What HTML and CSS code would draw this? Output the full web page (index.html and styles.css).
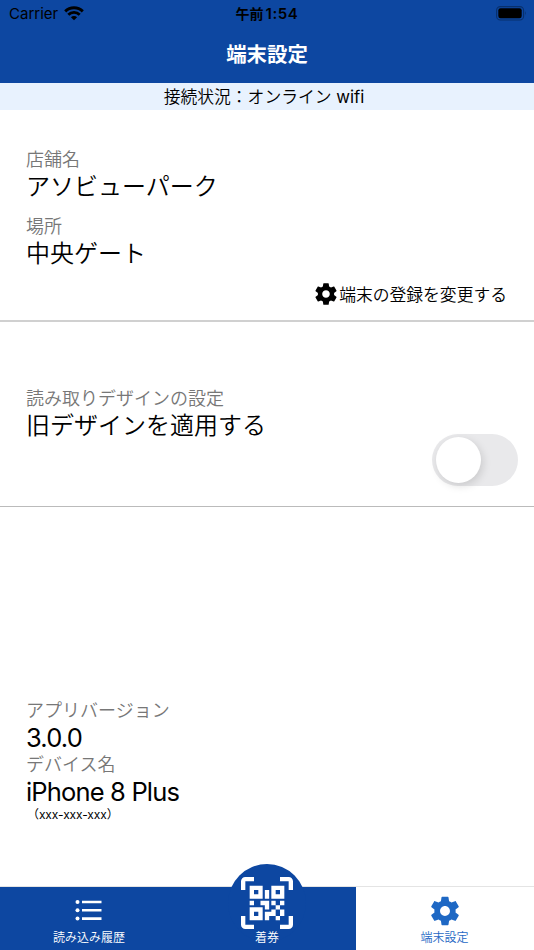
FILE: index.html
```html
<!DOCTYPE html>
<html lang="ja">
<head>
  <meta charset="utf-8">
  <title>端末設定</title>
  <link rel="stylesheet" href="styles.css">
</head>
<body>
  <header class="header">
    <div class="statusbar">
      <div class="carrier">
        <span>Carrier</span>
        <svg class="wifi" viewBox="0 0 20 15">
          <path d="M1.2 5.4 A12.5 12.5 0 0 1 18.8 5.4" />
          <path d="M4.3 8.7 A8.1 8.1 0 0 1 15.7 8.7" />
          <path class="wifi-dot" d="M10 14.3 L6.9 11.2 A4.4 4.4 0 0 1 13.1 11.2 Z" />
        </svg>
      </div>
      <div class="clock">午前<span class="clock-num">1:54</span></div>
      <svg class="battery" viewBox="0 0 31 15">
        <rect x="0.6" y="0.6" width="27" height="13.4" rx="3.8" />
        <rect class="battery-level" x="2.3" y="2.3" width="23.4" height="10" rx="2.2" />
        <path class="battery-cap" d="M29 5 Q30.8 7.3 29 9.6 Z" />
      </svg>
    </div>
    <h1 class="title">端末設定</h1>
  </header>
  <div class="connection">接続状況：オンライン <span class="network">wifi</span></div>

  <main class="content">
    <section class="shop">
      <div class="label">店舗名</div>
      <div class="value">アソビューパーク</div>
      <div class="label place">場所</div>
      <div class="value">中央ゲート</div>
      <button class="btn-change">
        <svg class="gear" viewBox="0 0 24 24"><use href="#gear" /></svg>
        <span>端末の登録を変更する</span>
      </button>
    </section>

    <section class="design">
      <div class="label">読み取りデザインの設定</div>
      <div class="value">旧デザインを適用する</div>
      <button class="toggle" role="switch" aria-checked="false"><span class="knob"></span></button>
    </section>

    <section class="device">
      <div class="label">アプリバージョン</div>
      <div class="value latin">3.0.0</div>
      <div class="label">デバイス名</div>
      <div class="value latin">iPhone 8 Plus</div>
      <div class="device-id">（xxx-xxx-xxx）</div>
    </section>
  </main>

  <nav class="tabs">
    <a class="tab">
      <svg class="icon-list" viewBox="0 0 28 22">
        <circle cx="2.5" cy="3" r="2" /><circle cx="2.5" cy="11.3" r="2" /><circle cx="2.5" cy="19.6" r="2" />
        <path d="M7 3H26.5M7 11.3H26.5M7 19.6H26.5" />
      </svg>
      <span>読み込み履歴</span>
    </a>
    <a class="tab tab-scan">
      <svg class="icon-qr" viewBox="0 0 24 24">
        <path d="M4,4H10V10H4V4M20,4V10H14V4H20M14,15H16V13H14V11H16V13H18V11H20V13H18V15H20V18H18V20H16V18H13V20H11V16H14V15M16,15V18H18V15H16M4,20V14H10V20H4M6,6V8H8V6H6M16,6V8H18V6H16M6,16V18H8V16H6M4,11H6V13H4V11M9,11H13V15H11V13H9V11M11,6H13V10H11V6M2,2V6H0V2A2,2 0 0,1 2,0H6V2H2M22,0A2,2 0 0,1 24,2V6H22V2H18V0H22M2,18V22H6V24H2A2,2 0 0,1 0,22V18H2M22,22V18H24V22A2,2 0 0,1 22,24H18V22H22Z" />
      </svg>
      <span>着券</span>
    </a>
    <a class="tab active">
      <svg class="icon-gear" viewBox="0 0 24 24"><use href="#gear" /></svg>
      <span>端末設定</span>
    </a>
  </nav>

  <svg class="defs" width="0" height="0">
    <symbol id="gear" viewBox="0 0 24 24">
      <path d="M19.43 12.98c.04-.32.07-.64.07-.98s-.03-.66-.07-.98l2.11-1.65c.19-.15.24-.42.12-.64l-2-3.46c-.12-.22-.39-.3-.61-.22l-2.49 1c-.52-.4-1.08-.73-1.69-.98l-.38-2.65C14.46 2.18 14.25 2 14 2h-4c-.25 0-.46.18-.49.42l-.38 2.65c-.61.25-1.17.59-1.69.98l-2.49-1c-.23-.09-.49 0-.61.22l-2 3.46c-.13.22-.07.49.12.64l2.11 1.65c-.04.32-.07.65-.07.98s.03.66.07.98l-2.11 1.65c-.19.15-.24.42-.12.64l2 3.46c.12.22.39.3.61.22l2.49-1c.52.4 1.08.73 1.69.98l.38 2.65c.03.24.24.42.49.42h4c.25 0 .46-.18.49-.42l.38-2.65c.61-.25 1.17-.59 1.69-.98l2.49 1c.23.09.49 0 .61-.22l2-3.46c.12-.22.07-.49-.12-.64l-2.11-1.65zM12 15.5c-1.93 0-3.5-1.57-3.5-3.5s1.57-3.5 3.5-3.5 3.5 1.57 3.5 3.5-1.57 3.5-3.5 3.5z" />
    </symbol>
  </svg>
</body>
</html>
```
FILE: styles.css
```css
* { box-sizing: border-box; }
html, body {
  margin: 0; padding: 0;
  height: 100%;
}
body {
  display: flex;
  flex-direction: column;
  background: #fff;
  color: #000;
  font-family: Inter, 'Noto Sans CJK JP', sans-serif;
  font-weight: 350;
  overflow: hidden;
}
button {
  font: inherit; color: inherit;
  border: none; padding: 0;
  background: none;
  cursor: pointer;
}
svg { display: block; flex: none; }
.defs { position: absolute; }

/* header */
.header {
  height: 83px;
  flex: none;
  background: #0d47a1;
}
.statusbar {
  height: 27px;
  display: grid;
  grid-template-columns: 1fr auto 1fr;
  align-items: center;
  padding: 0 7px 0 9px;
}
.carrier {
  display: flex; align-items: center; gap: 6px;
  font-size: 15px;
  font-weight: 400;
}
.wifi {
  width: 20px; height: 15px;
  margin-top: -1px;
  fill: none;
  stroke: #000;
  stroke-width: 2.9;
}
.wifi-dot { fill: #000; stroke: none; }
.clock {
  font-size: 14px;
  font-weight: 700;
  line-height: 27px;
  margin-left: -2px;
}
.clock-num {
  font-size: 15px;
  font-weight: 600;
  letter-spacing: 0.6px;
  margin-left: 2px;
}
.battery {
  width: 31px; height: 15px;
  justify-self: end;
  fill: none;
  stroke: #08306c;
  stroke-width: 1.1;
}
.battery-level { fill: #000; stroke: none; }
.battery-cap { fill: #08306c; stroke: none; }
.title {
  margin: 0;
  height: 56px;
  line-height: 56px;
  color: #fff;
  font-size: 20.4px;
  font-weight: 700;
  text-align: center;
}
.connection {
  height: 27px;
  flex: none;
  line-height: 28px;
  background: #e8f2fe;
  font-size: 16.8px;
  text-align: center;
  padding-right: 6px;
}
.network { font-weight: 400; }

/* settings */
.content { flex: 1; }
.label {
  color: #777;
  font-size: 18px;
  line-height: 27px;
}
.value {
  font-size: 24px;
  line-height: 27px;
}
.latin {
  font-size: 25.5px;
  font-weight: 400;
  letter-spacing: -0.83px;
}
.shop {
  height: 212px;
  padding: 36px 27px 0 26px;
  border-bottom: 2px solid #d0d0d0;
}
.place { margin-top: 13px; }
.btn-change {
  display: flex; align-items: center;
  height: 27px;
  margin: 13px 0 0 auto;
  font-size: 16.8px;
}
.gear { width: 26px; height: 26px; }
.design {
  height: 185px;
  padding: 63px 16px 0 26px;
  border-bottom: 1px solid #bbb;
}
.toggle {
  display: flex; align-items: center;
  width: 86px; height: 52px;
  margin: -5px 0 0 auto;
  padding-left: 4px;
  border-radius: 26px;
  background: #e9e9eb;
}
.knob {
  width: 45px; height: 46px;
  border-radius: 50%;
  background: #fff;
  box-shadow: 2px 3px 9px #0002;
}
.device { padding: 190px 26px 0; }
.device-id {
  font-size: 12px;
  font-weight: 400;
  line-height: 19px;
  letter-spacing: -0.1px;
  padding-left: 1px;
}

/* bottom tabs */
.tabs {
  display: grid;
  grid-template-columns: repeat(3, 1fr);
  grid-template-rows: 63px;
  flex: none;
  height: 64px;
  border-top: 1px solid #e4e4e4;
}
.tab {
  position: relative;
  display: flex; flex-direction: column; align-items: center; justify-content: flex-end;
  min-height: 0;
  background: #0d47a1;
  color: #fff;
  font-size: 12px;
  line-height: 18px;
  padding-bottom: 3px;
}
.tab span { position: relative; }
.tab.active {
  background: #fff;
  color: #1e68c4;
  padding-right: 1px;
}
.icon-list {
  width: 28px; height: 22px;
  margin-bottom: 8px;
  fill: #fff;
  stroke: none;
}
.icon-list path { stroke: #fff; stroke-width: 2.6; }
.icon-gear {
  width: 34px; height: 34px;
  margin-bottom: 1px;
  fill: currentColor;
}
/* round bump behind the scan icon */
.tab-scan::before {
  content: '';
  position: absolute;
  left: 50%; top: -23px;
  width: 78px; height: 78px;
  margin-left: -39px;
  border-radius: 50%;
  background: #0d47a1;
}
.icon-qr {
  position: relative;
  width: 52px; height: 52px;
  fill: #fff;
}
```
